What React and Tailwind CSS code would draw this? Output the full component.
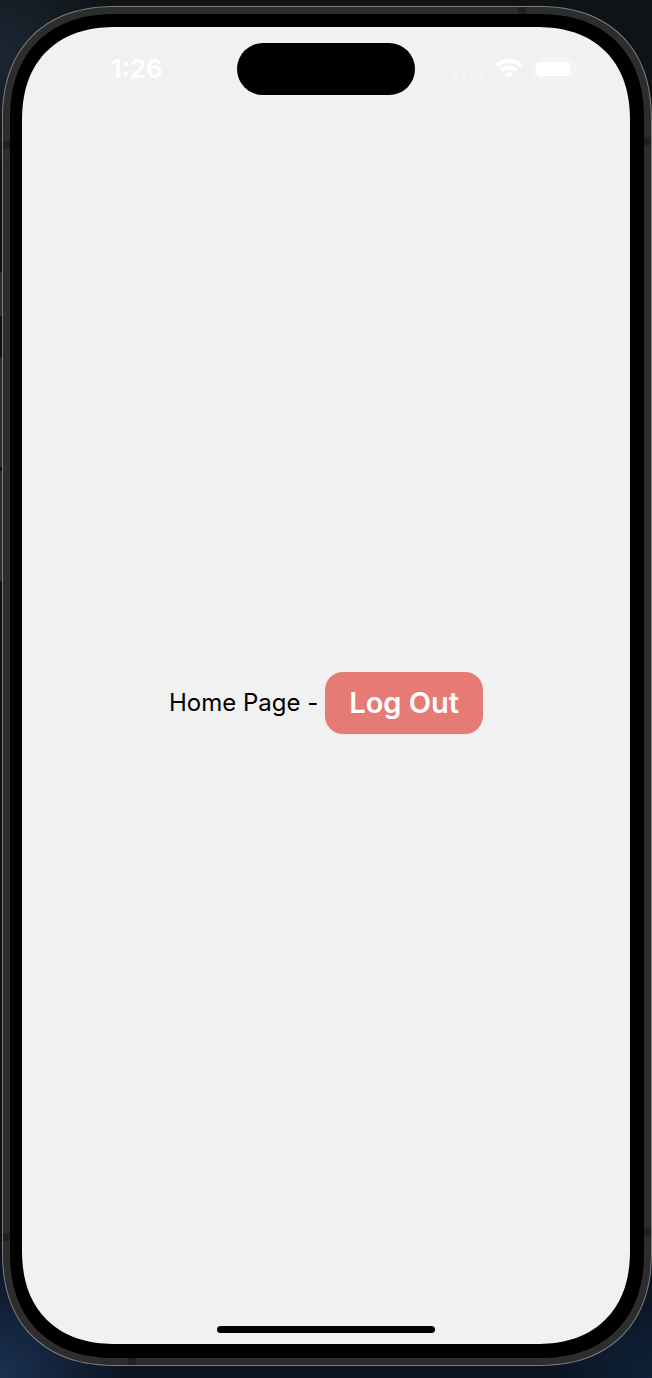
function AntennaBand({ className }) {
  return <span aria-hidden="true" className={`absolute bg-[#202020] ${className}`} />;
}

function SideButton({ className }) {
  return <span aria-hidden="true" className={`absolute -left-[3px] w-[2px] bg-[#2a3036] ${className}`} />;
}

function SignalDots() {
  return (
    <svg viewBox="0 0 32 6" className="h-[6px] w-[32px]" fill="#f5f5f5" aria-hidden="true">
      <circle cx="3" cy="3" r="2.6" />
      <circle cx="11.5" cy="3" r="2.6" />
      <circle cx="20" cy="3" r="2.6" />
      <circle cx="28.5" cy="3" r="2.6" />
    </svg>
  );
}

function WifiIcon() {
  return (
    <svg viewBox="0 0 28 20" className="h-5 w-7" aria-hidden="true">
      <g fill="none" stroke="#ffffff" strokeWidth="4.2">
        <path d="M2 6.8 A17.2 17.2 0 0 1 26 6.8" />
        <path d="M6.6 11.6 A10.7 10.7 0 0 1 21.4 11.6" />
      </g>
      <path d="M14 19.2 L9.6 15 A6.4 6.4 0 0 1 18.4 15 Z" fill="#ffffff" />
    </svg>
  );
}

function BatteryIcon() {
  return (
    <svg viewBox="0 0 45 20" className="h-5 w-[45px]" aria-hidden="true">
      <rect x="1" y="1" width="38" height="18" rx="6" fill="none" stroke="#f6f6f6" strokeWidth="2" />
      <rect x="3" y="3" width="34" height="14" rx="4.2" fill="#ffffff" />
      <path d="M41.5 6.8 C44.2 7.8 44.2 12.2 41.5 13.2 Z" fill="#f8f8f8" />
    </svg>
  );
}

function StatusBar() {
  return (
    <header className="grid grid-cols-[1fr_178px_1fr] items-center pt-4 text-white">
      <time className="pl-[14px] text-center text-[26px] leading-8 font-semibold">1:26</time>
      <div className="h-[52px] rounded-full bg-black" />
      <div className="flex items-center justify-center gap-[10px] pr-[14px]">
        <span className="pt-3">
          <SignalDots />
        </span>
        <WifiIcon />
        <BatteryIcon />
      </div>
    </header>
  );
}

export default function App() {
  return (
    <div className="flex min-h-screen bg-[#0b1420] bg-[radial-gradient(circle_at_0%_100%,#1a3152_0px,#0b142000_130px),radial-gradient(circle_at_100%_100%,#0e2138_0px,#0b142000_110px),radial-gradient(circle_at_0%_4%,#1c2733_0px,#0e141900_120px),linear-gradient(180deg,#0e1317_0%,#0c1119_50%,#0a1320_100%)] pt-[6px] pb-3 pl-[2px] font-['Inter',sans-serif]">
      <div className="relative flex flex-1 rounded-[114px] border border-[#7c7c7c] bg-[#2d2d2d] p-[7px] [corner-shape:superellipse(1.2)]">
        <SideButton className="top-[265px] h-11" />
        <SideButton className="top-[350px] h-[110px]" />
        <SideButton className="top-[464px] h-[110px]" />
        <AntennaBand className="top-0 right-[125px] h-[7px] w-2" />
        <AntennaBand className="bottom-0 left-[125px] h-[7px] w-2" />
        <AntennaBand className="top-[134px] left-0 h-2 w-[7px]" />
        <AntennaBand className="top-[130px] right-0 h-2 w-[7px]" />
        <AntennaBand className="bottom-[124px] left-0 h-2 w-[7px]" />
        <AntennaBand className="right-0 bottom-[129px] h-2 w-[7px]" />
        <div className="flex flex-1 rounded-[106px] bg-black pt-[13px] pr-[14px] pb-[14px] pl-3 [corner-shape:superellipse(1.2)]">
          <div className="flex flex-1 flex-col rounded-[94px] bg-[#f1f1f1] [corner-shape:superellipse(1.2)]">
            <StatusBar />
            <main className="flex flex-1 items-center justify-center gap-[7px] pb-4">
              <p className="text-2xl leading-8 text-black">Home Page -</p>
              <button
                type="button"
                className="rounded-[18px] bg-[#e67a75] px-6 py-[15px] text-[29px] leading-8 font-semibold text-white"
              >
                Log Out
              </button>
            </main>
            <div className="mx-auto mb-[11px] h-[7px] w-[218px] rounded-full bg-black" />
          </div>
        </div>
      </div>
    </div>
  );
}
